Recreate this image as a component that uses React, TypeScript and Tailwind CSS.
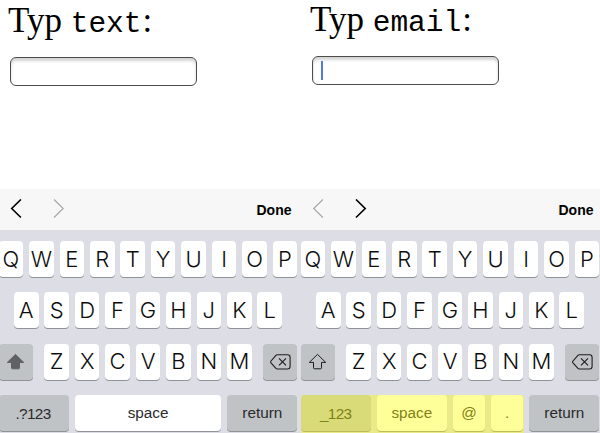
import React from "react";

const SANS = "font-['Inter','Liberation_Sans',sans-serif]";

function Key({
  children,
  className = "w-[24.6px] bg-white text-[22px]",
}: {
  children: React.ReactNode;
  className?: string;
}) {
  return (
    <div
      className={`flex h-[36px] shrink-0 items-center justify-center rounded-[4px] font-light shadow-[0_1px_0_#8f9296] ${className}`}
    >
      {children}
    </div>
  );
}

function Chevron({ dir, active }: { dir: "left" | "right"; active: boolean }) {
  return (
    <svg width="12" height="21" viewBox="0 0 12 21" fill="none" stroke={active ? "#000" : "#a8a8a8"} strokeWidth={active ? 1.6 : 1.2}>
      <path d={dir === "left" ? "M10.9 .5 L1.7 9.5 L10.9 18.5" : "M1 .5 L10.2 9.5 L1 18.5"} />
    </svg>
  );
}

function Shift({ filled }: { filled: boolean }) {
  return (
    <svg width="19" height="17" viewBox="0 0 19 17" fill={filled ? "#606163" : "none"} stroke={filled ? "#606163" : "#1c1c1c"} strokeWidth="1">
      <path d="M9.5 1.4 L17.7 9.4 H13.5 V14.8 Q13.5 15.8 12.5 15.8 H6.5 Q5.5 15.8 5.5 14.8 V9.4 H1.3 Z" />
    </svg>
  );
}

function Delete() {
  return (
    <svg width="21" height="16" viewBox="0 0 21 16" fill="none" stroke="#1c1c1c" strokeWidth="1.1">
      <path d="M7.3 .8 H17.6 Q20.1 .8 20.1 3.3 V12.5 Q20.1 15 17.6 15 H7.3 Q6.5 15 5.9 14.4 L.8 8.6 Q.4 7.9 .8 7.2 L5.9 1.4 Q6.5 .8 7.3 .8 Z M9 4.4 L16 11.4 M16 4.4 L9 11.4" />
    </svg>
  );
}

function Panel({ type }: { type: "text" | "email" }) {
  const email = type === "email";
  const label = "text-[15.3px] font-['Liberation_Sans','Inter',sans-serif] text-[#2a2a2a]";
  return (
    <section className="flex h-[433px] w-[302px] shrink-0 flex-col">
      <div className="h-[189px] pl-[8px]">
        <h1 className={`h-[42px] whitespace-pre font-['Liberation_Serif',serif] text-[35px] leading-[40px] text-black ${email ? "" : "pt-px"}`}>
          Typ <code className="mr-px font-['Liberation_Mono',monospace] text-[29.5px] leading-none">{type}</code>:
        </h1>
        <div
          className={`ml-[1.5px] flex h-[29px] w-[187px] items-center rounded-[6px] border border-[#4c4c4c] bg-white pl-[8px] shadow-[inset_0_3px_3px_#d4d4d4] ${email ? "mt-[14px]" : "mt-[15px]"}`}
        >
          {email && <span className="h-[19px] w-[2px] bg-[#5478e4]" />}
        </div>
      </div>
      <div className="flex h-[41px] items-center bg-[#f7f7f7] pl-[10px] pr-[10.5px]">
        <Chevron dir="left" active={!email} />
        <div className="ml-[31px] flex"><Chevron dir="right" active={email} /></div>
        <span className="ml-auto font-['Liberation_Sans',sans-serif] text-[14px] font-bold leading-none text-black">Done</span>
      </div>
      <div className={`h-[203px] bg-[#dddde5] pt-[11px] text-[#0c0c0c] ${SANS}`}>
        <div className="ml-[-1.4px] flex w-[298.8px] flex-col gap-[15.3px]">
          <div className="flex justify-between">
            {[..."QWERTYUIOP"].map((k) => <Key key={k}>{k}</Key>)}
          </div>
          <div className="flex justify-between px-[15.3px]">
            {[..."ASDFGHJKL"].map((k) => <Key key={k}>{k}</Key>)}
          </div>
          <div className="flex justify-between">
            <Key className="w-[34.4px] bg-[#bfc3c6]"><Shift filled={!email} /></Key>
            <div className="flex w-[207.4px] justify-between">
              {[..."ZXCVBNM"].map((k) => <Key key={k}>{k}</Key>)}
            </div>
            <Key className="w-[34.2px] bg-[#bfc3c6]"><Delete /></Key>
          </div>
          {email ? (
            <div className="relative flex justify-between">
              <Key className={`w-[70.2px] bg-[#bfc3c6] pt-[3px] tracking-[-0.6px] ${label}`}>_123</Key>
              <Key className={`w-[70.5px] bg-white pt-[2px] ${label}`}>space</Key>
              <Key className={`w-[32.3px] bg-white pt-[2px] ${label}`}>@</Key>
              <Key className={`w-[32.3px] bg-white pt-[2px] ${label}`}>.</Key>
              <Key className={`w-[70.2px] bg-[#bfc3c6] pt-[2px] ${label}`}>return</Key>
              <div className="absolute left-[.8px] top-[.5px] h-[38px] w-[222.3px] rounded-t-[3px] bg-[rgba(255,255,0,0.4)]" />
            </div>
          ) : (
            <div className="flex justify-between">
              <Key className={`w-[70.4px] bg-[#bfc3c6] pr-[1.5px] pt-[3px] tracking-[-0.6px] ${label}`}>.?123</Key>
              <Key className={`w-[146.6px] bg-white pt-[2px] ${label}`}>space</Key>
              <Key className={`w-[70.2px] bg-[#bfc3c6] pt-[2px] ${label}`}>return</Key>
            </div>
          )}
        </div>
      </div>
    </section>
  );
}

export default function App() {
  return (
    <main className="flex h-[433px] w-[600px] overflow-hidden bg-white">
      <Panel type="text" />
      <Panel type="email" />
    </main>
  );
}
